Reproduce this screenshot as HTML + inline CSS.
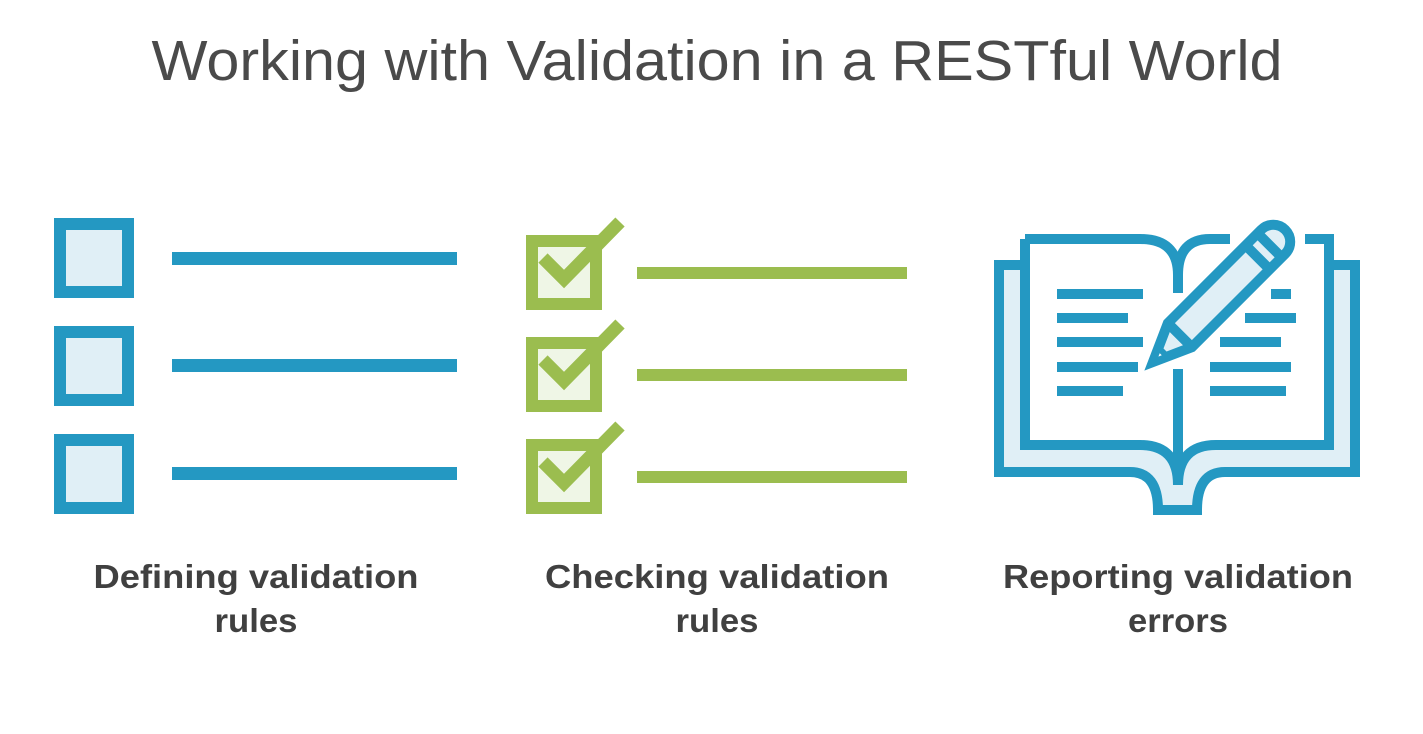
<!DOCTYPE html>
<html><head><meta charset="utf-8"><style>
html,body{margin:0;padding:0;background:#fff;}
svg{display:block}
</style></head><body>
<svg width="1423" height="734" viewBox="0 0 1423 734" xmlns="http://www.w3.org/2000/svg">
<rect width="1423" height="734" fill="#fff"/>
<text x="717" y="80" text-anchor="middle" font-family="Liberation Sans, sans-serif" font-size="57" fill="#4a4a4a" textLength="1131" lengthAdjust="spacingAndGlyphs">Working with Validation in a RESTful World</text>

<g fill="#e0eff6" stroke="#2498c2" stroke-width="12">
<rect x="60" y="224" width="68" height="68"/>
<rect x="60" y="332" width="68" height="68"/>
<rect x="60" y="440" width="68" height="68"/>
</g>
<g fill="#2498c2">
<rect x="172" y="252" width="285" height="13"/>
<rect x="172" y="359" width="285" height="13"/>
<rect x="172" y="467" width="285" height="13"/>
</g>

<g id="cb">
<rect x="532" y="241" width="64" height="63" fill="#eff6e6" stroke="#9bbd4f" stroke-width="12"/>
<path d="M543,258 L564,279 L620,222" fill="none" stroke="#9bbd4f" stroke-width="13"/>
<rect x="637" y="267" width="270" height="12" fill="#9bbd4f"/>
</g>
<use href="#cb" transform="translate(0,102)"/>
<use href="#cb" transform="translate(0,204)"/>

<g fill="none" stroke="#2498c2" stroke-width="10">
<path d="M1025,265 H999 V472 H1130 Q1158,472 1158,510 H1197 Q1197,472 1225,472 H1355 V265 H1329" fill="#e0eff6"/>
<path d="M1025,239 V445 H1140 Q1178,445 1178,485 Q1178,445 1216,445 H1329 V239 H1305" fill="#fff"/>
<path d="M1025,239 H1140 Q1178,239 1178,275 V293"/>
<path d="M1178,275 Q1178,239 1210,239 H1230"/>
<path d="M1178,369 V485"/>
</g>
<g fill="#2498c2">
<rect x="1057" y="289" width="86" height="10"/>
<rect x="1057" y="313" width="71" height="10"/>
<rect x="1057" y="337" width="86" height="10"/>
<rect x="1057" y="362" width="81" height="10"/>
<rect x="1057" y="386" width="66" height="10"/>
<rect x="1271" y="289" width="20" height="10"/>
<rect x="1245" y="313" width="51" height="10"/>
<rect x="1220" y="337" width="61" height="10"/>
<rect x="1210" y="362" width="81" height="10"/>
<rect x="1210" y="386" width="76" height="10"/>
</g>
<g transform="translate(1153,362) rotate(-45)" fill="none" stroke="#2498c2" stroke-width="10" stroke-linejoin="miter">
<path d="M0,0 L38,-17 H170 A17,17 0 0 1 170,17 H38 Z" fill="#e0eff6"/>
<path d="M38,-17 V17 M148,-17 V17 M165,-17 V17"/>
<path d="M0,0 L14,-6 V6 Z" fill="#fff" stroke-width="6"/>
</g>

<g font-family="Liberation Sans, sans-serif" font-weight="bold" font-size="33" fill="#404040" text-anchor="middle" lengthAdjust="spacingAndGlyphs">
<text x="256" y="588" textLength="325" lengthAdjust="spacingAndGlyphs">Defining validation</text>
<text x="256" y="632" textLength="83" lengthAdjust="spacingAndGlyphs">rules</text>
<text x="717" y="588" textLength="344" lengthAdjust="spacingAndGlyphs">Checking validation</text>
<text x="717" y="632" textLength="83" lengthAdjust="spacingAndGlyphs">rules</text>
<text x="1178" y="588" textLength="350" lengthAdjust="spacingAndGlyphs">Reporting validation</text>
<text x="1178" y="632" textLength="100" lengthAdjust="spacingAndGlyphs">errors</text>
</g>
</svg>
</body></html>
